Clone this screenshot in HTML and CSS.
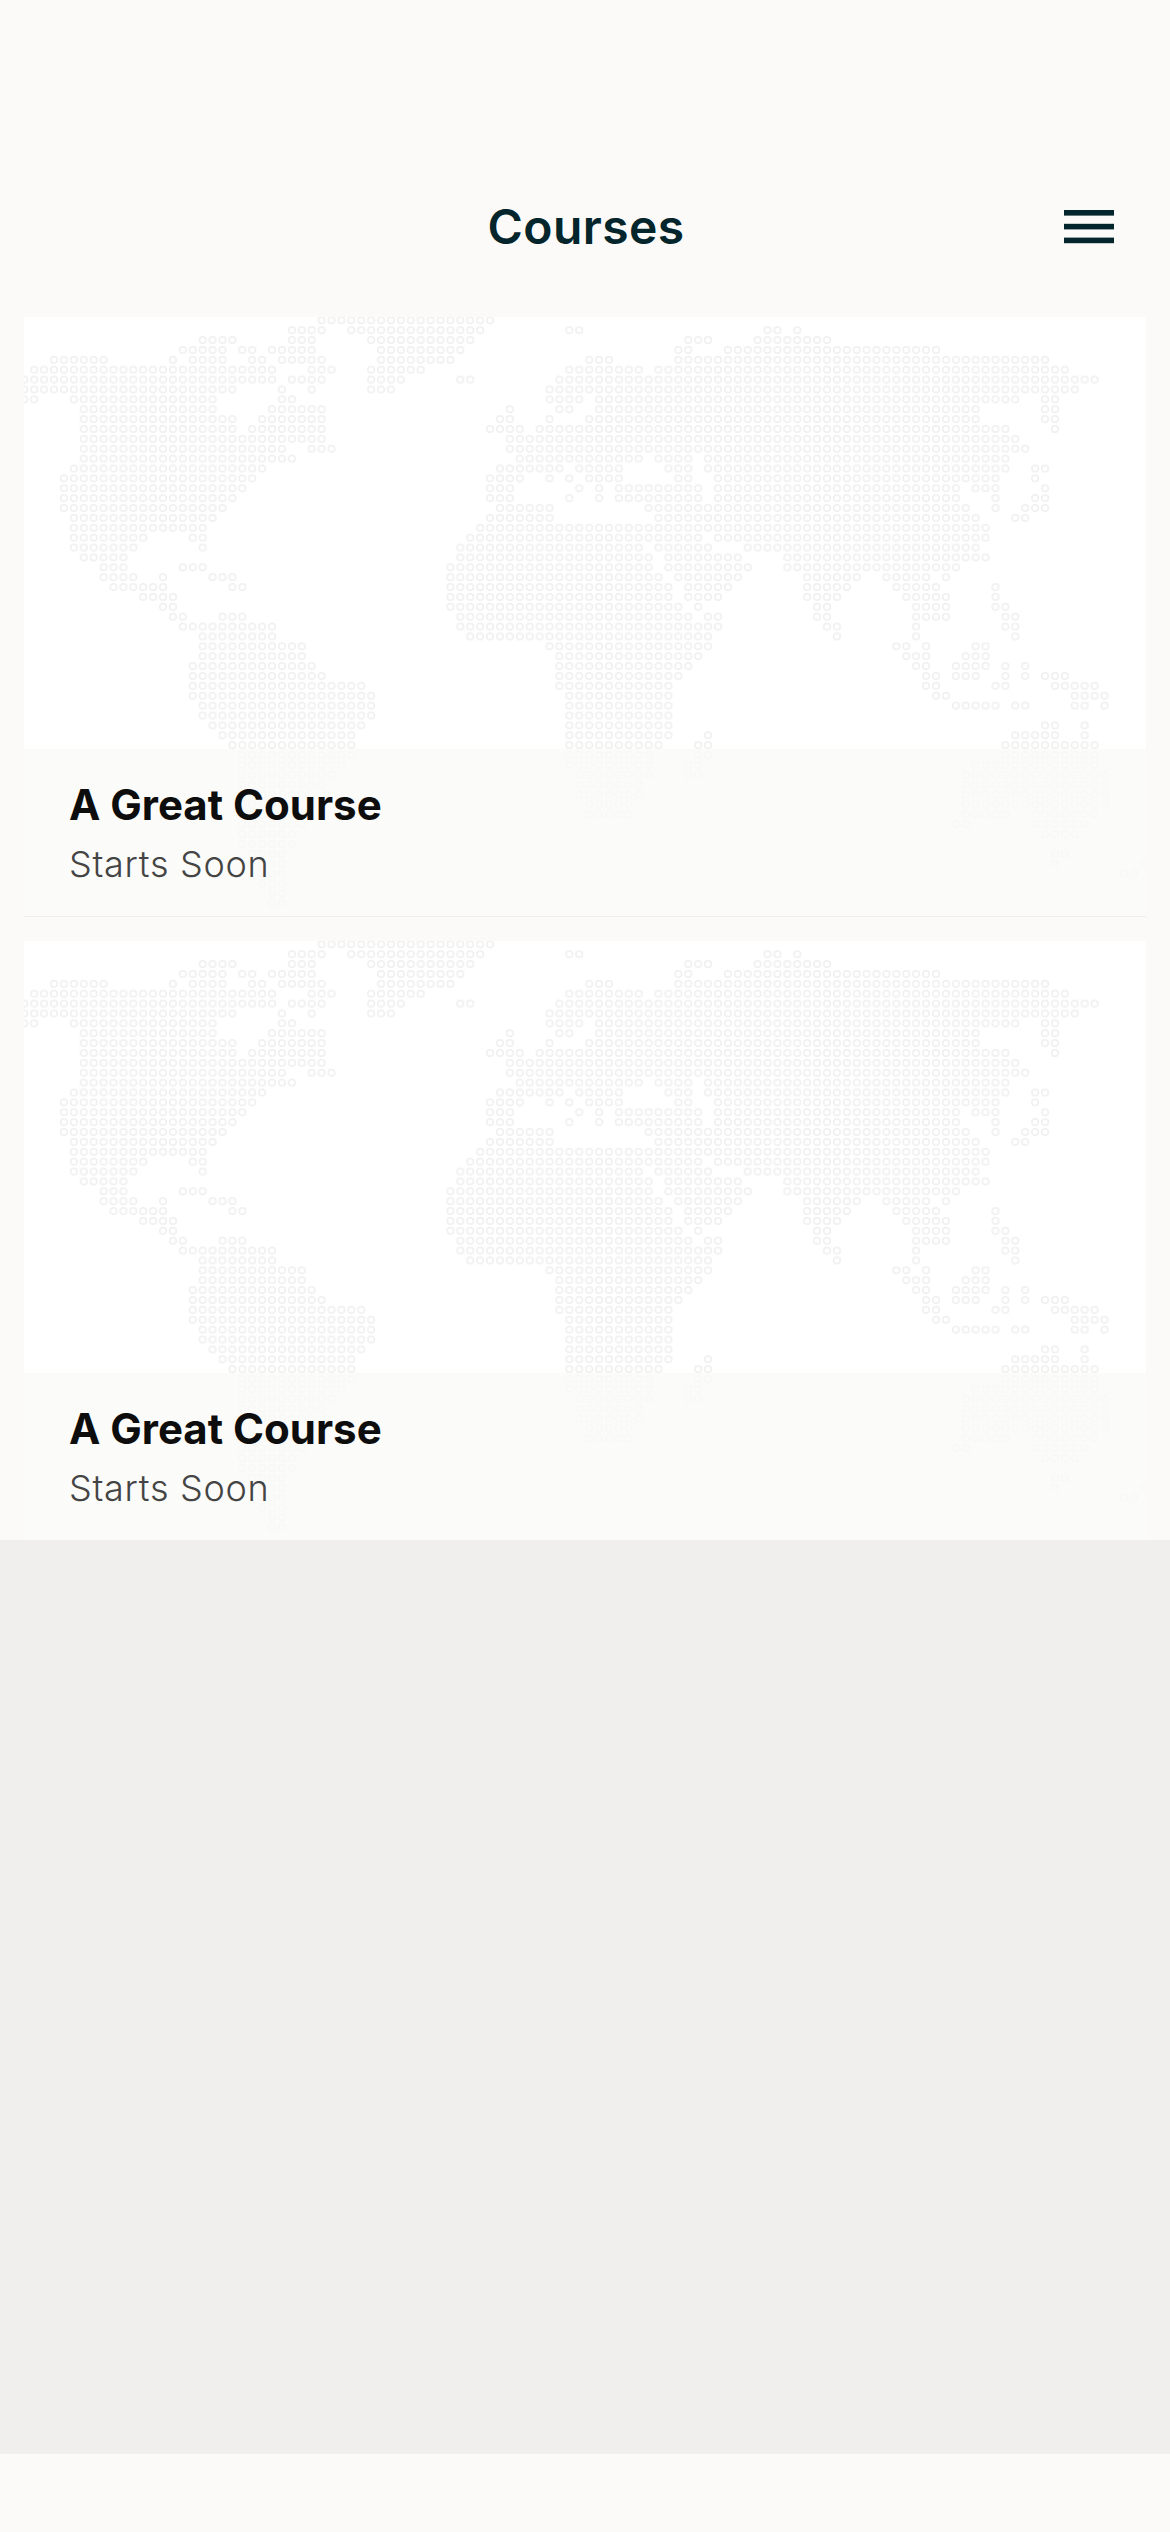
FILE: index.html
```html
<!DOCTYPE html>
<html lang="en">
<head>
<meta charset="utf-8">
<title>Courses</title>
<link rel="stylesheet" href="styles.css">
</head>
<body>
<div class="app">
  <header class="topbar">
    <span></span>
    <h1 class="page-title">Courses</h1>
    <button class="menu-button" aria-label="Menu">
      <svg class="menu-icon" width="50" height="34" viewBox="0 0 50 34"><rect x="0" y="0" width="50" height="5.6"/><rect x="0" y="13.8" width="50" height="5.6"/><rect x="0" y="27.6" width="50" height="5.6"/></svg>
    </button>
  </header>
  <main class="courses">
    <article class="card card-divided">
      <svg class="map" viewBox="0.47 0.166 113.22 60.73" preserveAspectRatio="none" aria-hidden="true">
        <defs>
          <pattern id="ring" patternUnits="userSpaceOnUse" width="1" height="1">
            <circle cx="0.5" cy="0.5" r="0.33" fill="none" stroke="#efefef" stroke-width="0.16"/>
          </pattern>
        </defs>
        <path id="world" fill="url(#ring)" d="M30 0H48V1H30Z
M27 1H31V2H27ZM33 1H47V2H33ZM55 1H57V2H55ZM75 1H77V2H75ZM78 1H79V2H78Z
M18 2H22V3H18ZM27 2H30V3H27ZM35 2H46V3H35ZM67 2H70V3H67ZM74 2H82V3H74Z
M16 3H21V4H16ZM22 3H24V4H22ZM25 3H30V4H25ZM36 3H45V4H36ZM66 3H68V4H66ZM71 3H93V4H71Z
M3 4H9V5H3ZM15 4H16V5H15ZM17 4H21V5H17ZM23 4H25V5H23ZM26 4H31V5H26ZM36 4H44V5H36ZM57 4H60V5H57ZM66 4H104V5H66Z
M1 5H26V6H1ZM29 5H32V6H29ZM35 5H41V6H35ZM55 5H63V6H55ZM64 5H106V6H64Z
M0 6H26V7H0ZM27 6H31V7H27ZM35 6H39V7H35ZM44 6H46V7H44ZM54 6H109V7H54Z
M0 7H22V8H0ZM26 7H27V8H26ZM29 7H30V8H29ZM35 7H38V8H35ZM53 7H107V8H53Z
M0 8H2V9H0ZM5 8H20V9H5ZM26 8H28V9H26ZM53 8H57V9H53ZM58 8H101V9H58ZM103 8H105V9H103Z
M6 9H20V10H6ZM25 9H31V10H25ZM49 9H50V10H49ZM54 9H56V10H54ZM58 9H97V10H58ZM103 9H105V10H103Z
M6 10H22V11H6ZM24 10H31V11H24ZM48 10H50V11H48ZM53 10H54V11H53ZM57 10H97V11H57ZM103 10H105V11H103Z
M6 11H22V12H6ZM23 11H31V12H23ZM47 11H51V12H47ZM52 11H100V12H52ZM104 11H105V12H104Z
M6 12H31V13H6ZM49 12H101V13H49Z
M6 13H27V14H6ZM29 13H32V14H29ZM49 13H102V14H49Z
M6 14H28V15H6ZM50 14H63V15H50ZM64 14H68V15H64ZM69 14H100V15H69Z
M5 15H25V16H5ZM48 15H55V16H48ZM56 15H61V16H56ZM65 15H68V16H65ZM69 15H100V16H69ZM102 15H104V16H102Z
M4 16H24V17H4ZM47 16H51V17H47ZM53 16H54V17H53ZM55 16H56V17H55ZM57 16H61V17H57ZM66 16H68V17H66ZM70 16H99V17H70ZM102 16H103V17H102Z
M4 17H23V18H4ZM47 17H50V18H47ZM56 17H57V18H56ZM58 17H59V18H58ZM60 17H69V18H60ZM70 17H95V18H70ZM96 17H99V18H96ZM103 17H104V18H103Z
M4 18H22V19H4ZM47 18H50V19H47ZM55 18H56V19H55ZM58 18H59V19H58ZM60 18H69V19H60ZM70 18H95V19H70ZM98 18H99V19H98ZM102 18H104V19H102Z
M4 19H21V20H4ZM48 19H54V20H48ZM63 19H96V20H63ZM98 19H99V20H98ZM101 19H104V20H101Z
M5 20H20V21H5ZM47 20H54V21H47ZM64 20H97V21H64ZM100 20H102V21H100Z
M5 21H19V22H5ZM46 21H98V22H46Z
M5 22H13V23H5ZM17 22H19V23H17ZM45 22H69V23H45ZM70 22H98V23H70Z
M5 23H12V24H5ZM18 23H19V24H18ZM44 23H63V24H44ZM64 23H70V24H64ZM73 23H97V24H73Z
M6 24H11V25H6ZM44 24H64V25H44ZM65 24H73V25H65ZM77 24H98V25H77Z
M8 25H11V26H8ZM16 25H19V26H16ZM43 25H64V26H43ZM65 25H74V26H65ZM77 25H95V26H77Z
M8 26H12V27H8ZM14 26H15V27H14ZM19 26H22V27H19ZM43 26H65V27H43ZM66 26H73V27H66ZM79 26H85V27H79ZM87 26H92V27H87ZM93 26H94V27H93Z
M9 27H15V28H9ZM21 27H23V28H21ZM43 27H66V28H43ZM67 27H72V28H67ZM79 27H84V28H79ZM88 27H93V28H88ZM98 27H99V28H98Z
M12 28H16V29H12ZM43 28H66V29H43ZM67 28H71V29H67ZM79 28H83V29H79ZM89 28H94V29H89ZM98 28H99V29H98Z
M14 29H16V30H14ZM43 29H67V30H43ZM68 29H69V30H68ZM80 29H82V30H80ZM90 29H94V30H90ZM98 29H100V30H98Z
M15 30H17V31H15ZM20 30H23V31H20ZM44 30H68V31H44ZM69 30H71V31H69ZM80 30H82V31H80ZM90 30H94V31H90ZM99 30H101V31H99Z
M16 31H26V32H16ZM44 31H71V32H44ZM81 31H83V32H81ZM90 31H91V32H90ZM99 31H101V32H99Z
M18 32H26V33H18ZM45 32H70V33H45ZM82 32H83V33H82ZM90 32H91V33H90ZM100 32H101V33H100Z
M18 33H29V34H18ZM53 33H70V34H53ZM88 33H90V34H88ZM91 33H92V34H91ZM96 33H98V34H96Z
M18 34H29V35H18ZM54 34H69V35H54ZM89 34H92V35H89ZM95 34H98V35H95Z
M17 35H30V36H17ZM54 35H68V36H54ZM90 35H92V36H90ZM94 35H98V36H94ZM99 35H100V36H99ZM101 35H102V36H101Z
M17 36H31V37H17ZM54 36H67V37H54ZM91 36H93V37H91ZM94 36H97V37H94ZM99 36H100V37H99ZM101 36H102V37H101ZM103 36H106V37H103Z
M17 37H35V38H17ZM54 37H66V38H54ZM91 37H93V38H91ZM98 37H100V38H98ZM104 37H109V38H104Z
M17 38H36V39H17ZM55 38H66V39H55ZM92 38H94V39H92ZM106 38H110V39H106Z
M18 39H36V40H18ZM55 39H66V40H55ZM94 39H99V40H94ZM100 39H102V40H100ZM106 39H108V40H106ZM109 39H110V40H109Z
M18 40H36V41H18ZM55 40H66V41H55Z
M19 41H35V42H19ZM55 41H66V42H55ZM103 41H105V42H103ZM107 41H108V42H107Z
M20 42H34V43H20ZM55 42H66V43H55ZM69 42H70V43H69ZM100 42H105V43H100ZM107 42H108V43H107Z
M21 43H34V44H21ZM55 43H65V44H55ZM68 43H70V44H68ZM99 43H109V44H99Z
M22 44H34V45H22ZM55 44H64V45H55ZM68 44H70V45H68ZM99 44H109V45H99Z
M22 45H33V46H22ZM55 45H64V46H55ZM67 45H69V46H67ZM96 45H109V46H96Z
M22 46H32V47H22ZM56 46H64V47H56ZM67 46H69V47H67ZM95 46H110V47H95Z
M22 47H31V48H22ZM56 47H63V48H56ZM95 47H110V48H95Z
M22 48H30V49H22ZM56 48H63V49H56ZM95 48H110V49H95Z
M22 49H30V50H22ZM57 49H62V50H57ZM95 49H110V50H95Z
M22 50H29V51H22ZM57 50H62V51H57ZM95 50H100V51H95ZM102 50H109V51H102Z
M22 51H29V52H22ZM94 51H96V52H94ZM102 51H108V52H102Z
M22 52H28V53H22ZM103 52H107V53H103Z
M22 53H28V54H22Z
M23 54H27V55H23ZM104 54H106V55H104Z
M23 55H27V56H23ZM104 55H105V56H104ZM113 55H114V56H113Z
M24 56H27V57H24ZM111 56H113V57H111Z
M24 57H27V58H24Z
M25 58H27V59H25Z
M25 59H27V60H25Z"/>
      </svg>
      <div class="media"></div>
      <div class="caption">
        <h2 class="course-title">A Great Course</h2>
        <p class="course-status">Starts Soon</p>
      </div>
    </article>
    <article class="card">
      <svg class="map" viewBox="0.47 0.166 113.22 60.73" preserveAspectRatio="none" aria-hidden="true"><use href="#world"/></svg>
      <div class="media"></div>
      <div class="caption">
        <h2 class="course-title">A Great Course</h2>
        <p class="course-status">Starts Soon</p>
      </div>
    </article>
  </main>
  <div class="filler"></div>
  <footer class="footer"></footer>
</div>
</body>
</html>
```
FILE: styles.css
```css
* { box-sizing: border-box; }
html, body { margin: 0; padding: 0; }
body {
  background: #fbfaf8;
  font-family: "Inter", "Liberation Sans", sans-serif;
}
.app {
  display: flex;
  flex-direction: column;
  height: 2532px;
  overflow: hidden;
}
.topbar {
  display: grid;
  grid-template-columns: 1fr auto 1fr;
  align-items: center;
  height: 317px;
  padding: 190px 56px 53px 58px;
}
.page-title {
  margin: 0;
  font-size: 48px;
  line-height: 74px;
  font-weight: 600;
  letter-spacing: 0.4px;
  color: #03252b;
}
.menu-button {
  justify-self: end;
  display: flex;
  padding: 0;
  border: 0;
  background: none;
}
.menu-icon { display: block; fill: #03252b; }
.courses {
  display: flex;
  flex-direction: column;
  gap: 24px;
  padding: 0 24px;
}
.card {
  position: relative;
  overflow: hidden;
  height: 599px;
  background: #fff;
}
.card-divided {
  height: 600px;
  border-bottom: 1px solid #eeeeec;
}
.map {
  position: absolute;
  top: 0;
  left: 0;
  width: 1122px;
  height: 600px;
  filter: blur(0.6px);
}
.media { height: 432px; }
.caption {
  position: relative;
  height: 168px;
  padding: 31px 45px 0;
  background: rgba(250, 250, 248, 0.8);
}
.course-title {
  margin: 0 0 12px;
  font-size: 42px;
  line-height: 50px;
  font-weight: 700;
  color: #0d0d0d;
}
.course-status {
  margin: 0;
  font-size: 36px;
  line-height: 44px;
  font-weight: 300;
  letter-spacing: 0.7px;
  color: #444444;
}
.filler {
  flex: 1;
  background: #f0efed;
}
.footer {
  height: 78px;
  background: #fbfaf8;
}
```
